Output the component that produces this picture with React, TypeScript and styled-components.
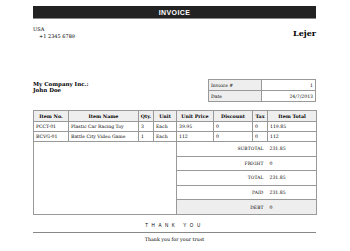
import styled, { createGlobalStyle } from "styled-components";

const GlobalStyle = createGlobalStyle`
  html, body {
    margin: 0;
    padding: 0;
    background: #fff;
  }
  body {
    font-family: "DejaVu Serif", "Liberation Serif", serif;
    color: #000;
  }
`;

const Page = styled.div`
  width: 283px;
  padding: 6px 34px 0 33px;
`;

const HeaderBar = styled.div`
  height: 12px;
  background: #222;
  border-bottom: 1px solid #888;
  color: #fff;
  font-family: "Liberation Sans", Arial, sans-serif;
  font-weight: bold;
  font-size: 7px;
  letter-spacing: 0.4px;
  display: flex;
  align-items: center;
  justify-content: center;
`;

const TopRow = styled.div`
  display: flex;
  justify-content: space-between;
  align-items: flex-start;
  margin-top: 7px;
  height: 53px;
`;

const Address = styled.div`
  font-size: 5px;
  line-height: 7px;
`;

const Phone = styled.div`
  padding-left: 6px;
`;

const Logo = styled.div`
  font-size: 8px;
  font-weight: bold;
  margin-top: 2px;
`;

const MiddleRow = styled.div`
  display: flex;
  justify-content: space-between;
  align-items: flex-start;
`;

const Customer = styled.div`
  font-size: 5.5px;
  font-weight: bold;
  line-height: 6px;
  margin-top: 2px;
`;

const Table = styled.table`
  border-collapse: collapse;
  table-layout: fixed;
  font-size: 4.6px;
`;

const MetaTable = styled(Table)`
  width: 108px;
`;

const MetaLabel = styled.td`
  border: 1px solid #999;
  background: #eee;
  height: 10px;
  padding: 0 2px;
  width: 48px;
`;

const MetaValue = styled.td`
  border: 1px solid #999;
  text-align: right;
  padding: 0 2px;
`;

const ItemsTable = styled(Table)`
  width: 283px;
  margin-top: 8px;
`;

const Th = styled.th`
  border: 1px solid #999;
  background: #eee;
  height: 10px;
  font-weight: bold;
  padding: 0;
  font-size: 4.8px;
`;

const Td = styled.td`
  border: 1px solid #999;
  height: 9px;
  padding: 0 2px;
  white-space: nowrap;
  overflow: hidden;
`;

const Blank = styled.td`
  border-left: 1px solid #999;
  border-bottom: 1px solid #999;
  border-right: 1px solid #999;
`;

const SumLabel = styled.td<{ $shade?: boolean }>`
  border-top: 1px solid #999;
  border-bottom: 1px solid #999;
  background: ${(p) => (p.$shade ? "#eee" : "#fff")};
  text-align: right;
  height: 13.6px;
  padding: 0 4px 0 0;
  font-size: 4.4px;
  letter-spacing: 0.1px;
`;

const SumValue = styled.td<{ $shade?: boolean }>`
  border-top: 1px solid #999;
  border-bottom: 1px solid #999;
  border-right: 1px solid #999;
  background: ${(p) => (p.$shade ? "#eee" : "#fff")};
  padding: 0 2px;
`;

const Thanks = styled.div`
  margin-top: 8px;
  text-align: center;
  font-family: "Liberation Sans", Arial, sans-serif;
  font-size: 4.5px;
  letter-spacing: 3.6px;
  padding-bottom: 4px;
  border-bottom: 1px solid #888;
`;

const Trust = styled.div`
  margin-top: 4px;
  text-align: center;
  font-size: 4.8px;
`;

const items = [
  { no: "PCCT-01", name: "Plastic Car Racing Toy", qty: "3", unit: "Each", price: "39.95", discount: "0", tax: "0", total: "119.85" },
  { no: "BCVG-01", name: "Battle City Video Game", qty: "1", unit: "Each", price: "112", discount: "0", tax: "0", total: "112" },
];

const summary = [
  { label: "SUBTOTAL", value: "231.85" },
  { label: "FRIGHT", value: "0" },
  { label: "TOTAL", value: "231.85" },
  { label: "PAID", value: "231.85" },
  { label: "DEBT", value: "0", shade: true },
];

export default function App() {
  return (
    <>
      <GlobalStyle />
      <Page>
        <HeaderBar>INVOICE</HeaderBar>

        <TopRow>
          <Address>
            <div>USA</div>
            <Phone>+1 2345 6789</Phone>
          </Address>
          <Logo>Lejer</Logo>
        </TopRow>

        <MiddleRow>
          <Customer>
            <div>My Company Inc.:</div>
            <div>John Doe</div>
          </Customer>
          <MetaTable>
            <tbody>
              <tr>
                <MetaLabel>Invoice #</MetaLabel>
                <MetaValue>1</MetaValue>
              </tr>
              <tr>
                <MetaLabel>Date</MetaLabel>
                <MetaValue>24/7/2013</MetaValue>
              </tr>
            </tbody>
          </MetaTable>
        </MiddleRow>

        <ItemsTable>
          <colgroup>
            <col style={{ width: 35 }} />
            <col style={{ width: 70 }} />
            <col style={{ width: 15 }} />
            <col style={{ width: 23 }} />
            <col style={{ width: 37 }} />
            <col style={{ width: 39 }} />
            <col style={{ width: 15 }} />
            <col style={{ width: 49 }} />
          </colgroup>
          <thead>
            <tr>
              <Th>Item No.</Th>
              <Th>Item Name</Th>
              <Th>Qty.</Th>
              <Th>Unit</Th>
              <Th>Unit Price</Th>
              <Th>Discount</Th>
              <Th>Tax</Th>
              <Th>Item Total</Th>
            </tr>
          </thead>
          <tbody>
            {items.map((it) => (
              <tr key={it.no}>
                <Td>{it.no}</Td>
                <Td>{it.name}</Td>
                <Td>{it.qty}</Td>
                <Td>{it.unit}</Td>
                <Td>{it.price}</Td>
                <Td>{it.discount}</Td>
                <Td>{it.tax}</Td>
                <Td>{it.total}</Td>
              </tr>
            ))}
            {summary.map((s, i) => (
              <tr key={s.label}>
                {i === 0 && <Blank colSpan={4} rowSpan={summary.length} />}
                <SumLabel colSpan={3} $shade={s.shade}>
                  {s.label}
                </SumLabel>
                <SumValue $shade={s.shade}>{s.value}</SumValue>
              </tr>
            ))}
          </tbody>
        </ItemsTable>

        <Thanks>THANK YOU</Thanks>
        <Trust>Thank you for your trust</Trust>
      </Page>
    </>
  );
}
